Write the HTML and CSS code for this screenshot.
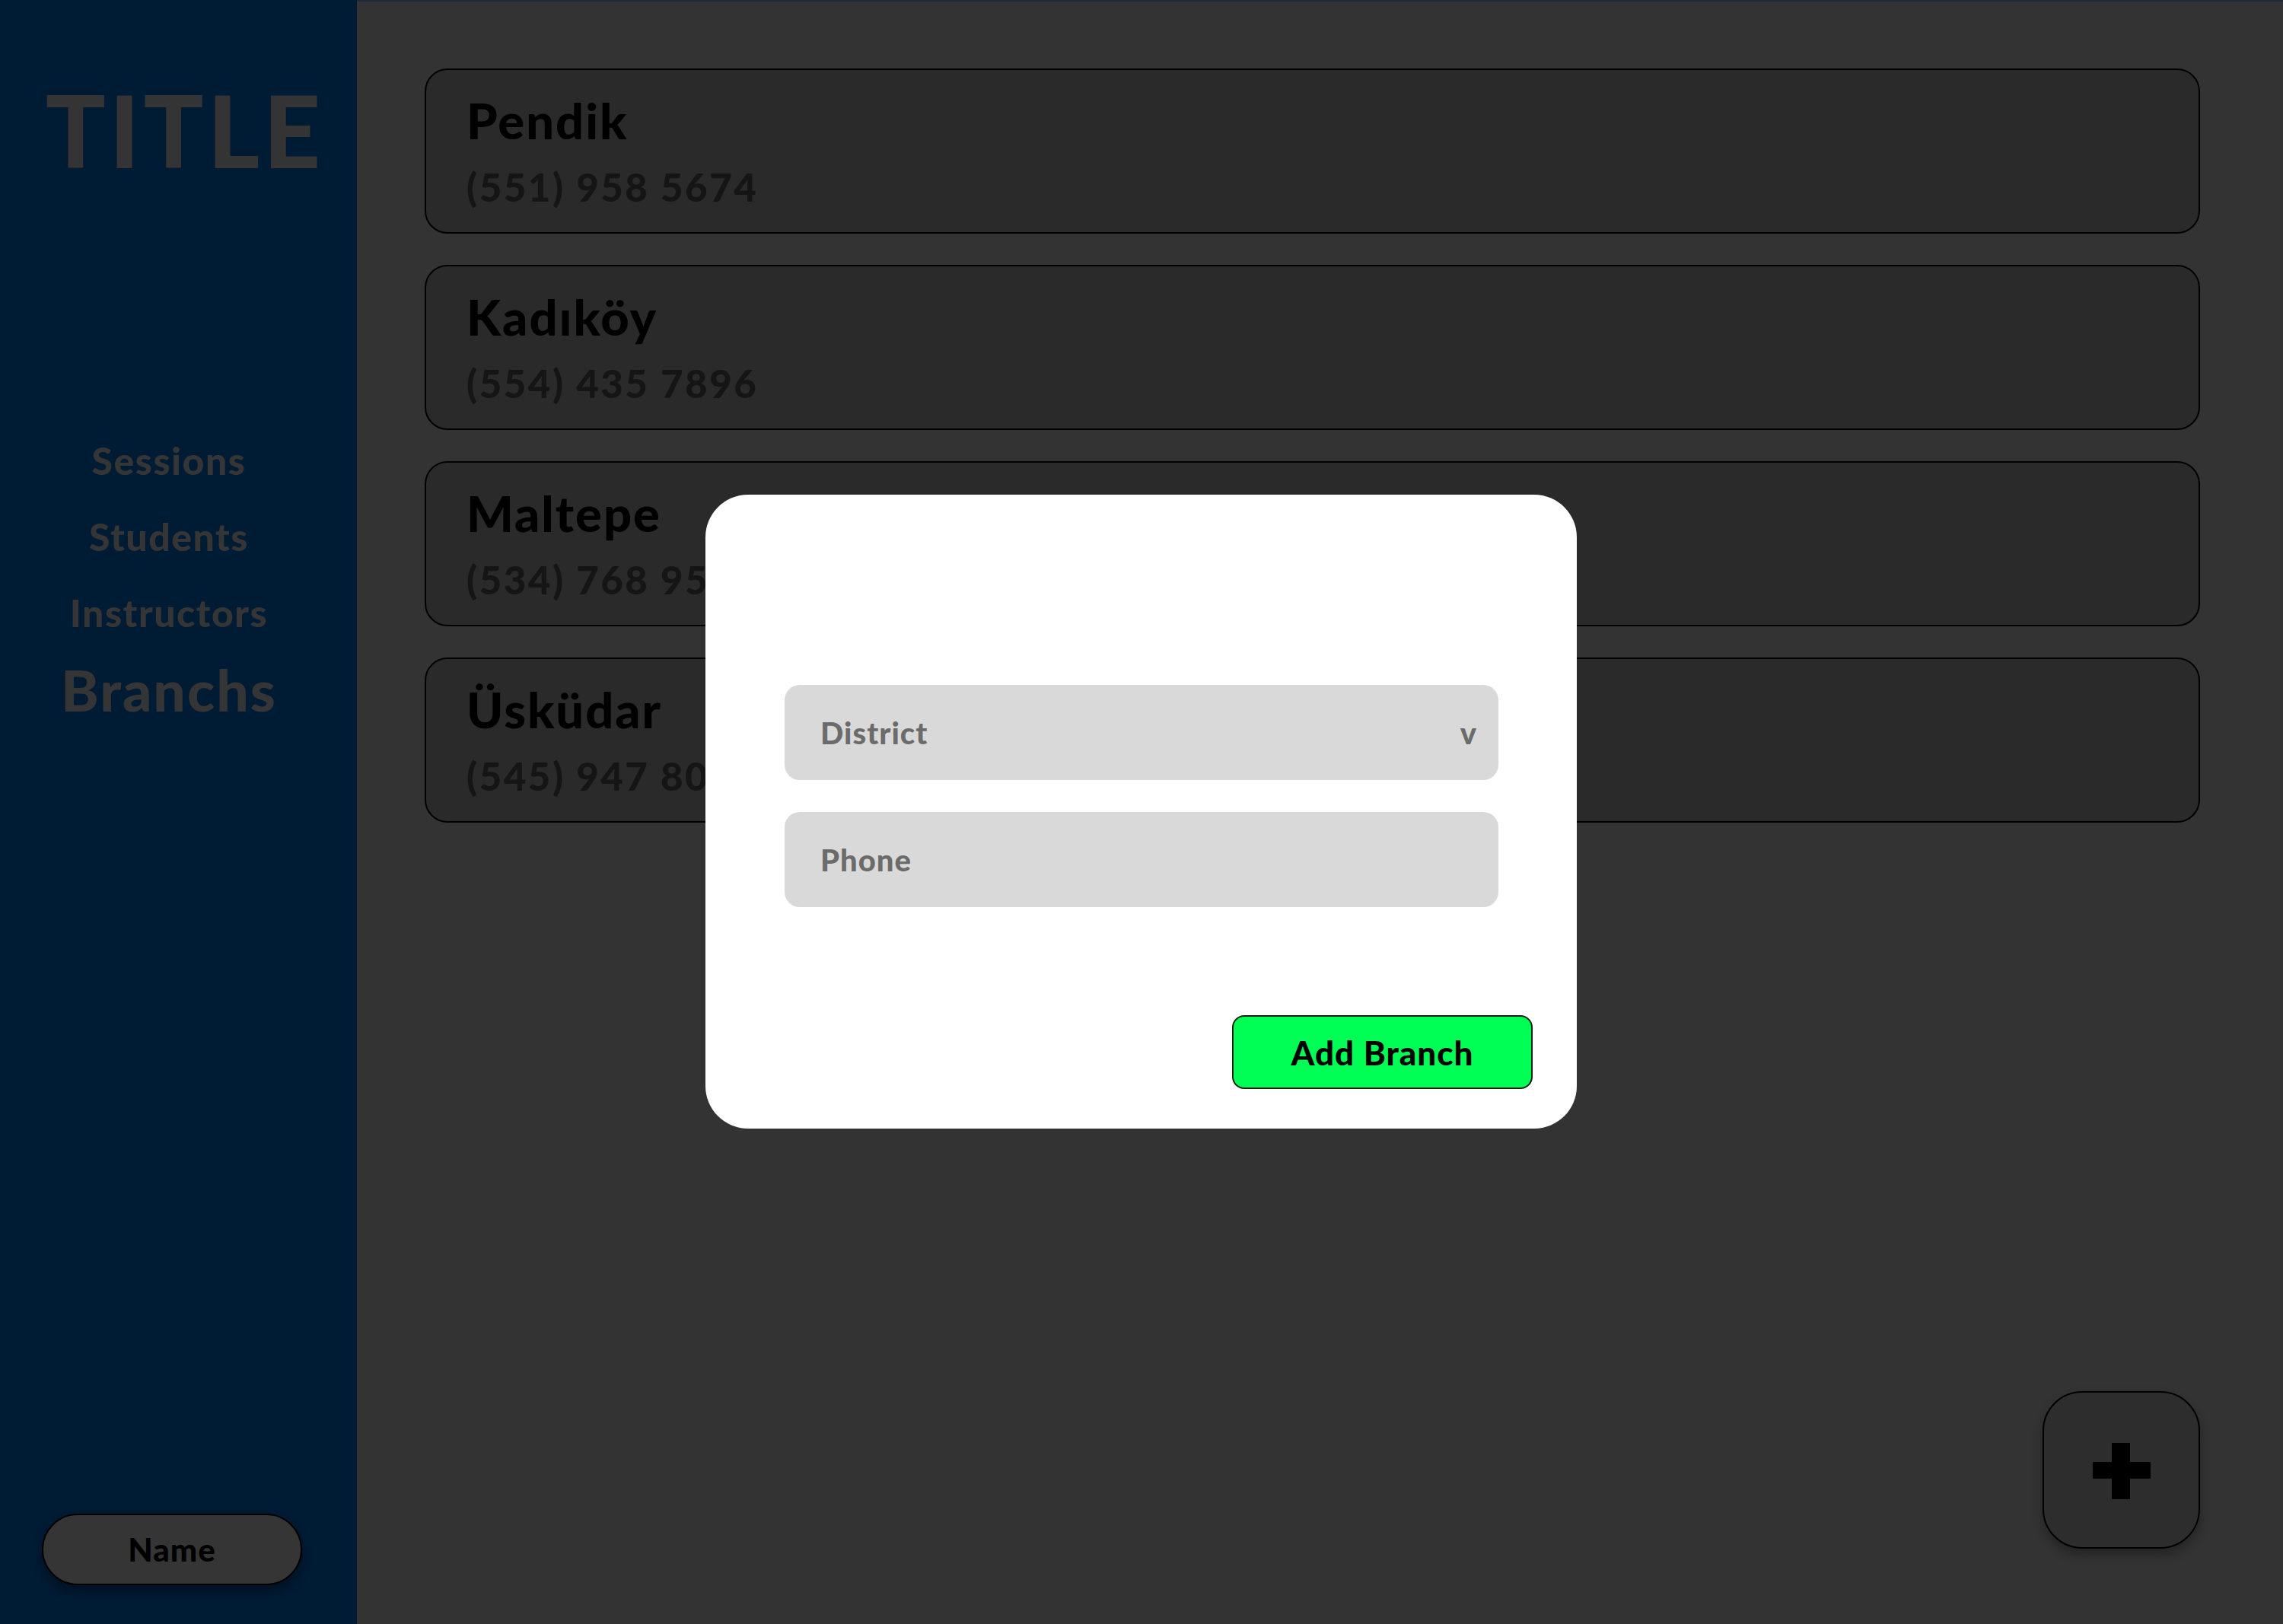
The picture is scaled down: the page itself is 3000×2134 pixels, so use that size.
FILE: index.html
```html
<!DOCTYPE html>
<html lang="en">
<head>
<meta charset="utf-8">
<title>Branchs</title>
<link rel="stylesheet" href="styles.css">
</head>
<body>
<div class="app">
  <aside class="sidebar">
    <h1 class="title">TITLE</h1>
    <nav class="nav">
      <a class="nav-item">Sessions</a>
      <a class="nav-item">Students</a>
      <a class="nav-item">Instructors</a>
      <a class="nav-item active">Branchs</a>
    </nav>
    <button class="name-btn">Name</button>
  </aside>
  <main class="main">
    <div class="card">
      <div class="card-name">Pendik</div>
      <div class="card-phone">(551) 958 5674</div>
    </div>
    <div class="card">
      <div class="card-name">Kadıköy</div>
      <div class="card-phone">(554) 435 7896</div>
    </div>
    <div class="card">
      <div class="card-name">Maltepe</div>
      <div class="card-phone">(534) 768 9521</div>
    </div>
    <div class="card">
      <div class="card-name">Üsküdar</div>
      <div class="card-phone">(545) 947 8012</div>
    </div>
  </main>
</div>
<button class="fab" aria-label="Add">
  <svg width="76" height="76" viewBox="0 0 76 76"><rect x="0" y="26" width="76" height="22" fill="#000"/><rect x="25" y="1" width="24" height="74" fill="#000"/></svg>
</button>
<div class="modal">
  <div class="fields">
    <div class="field select"><span class="ph">District</span><span class="caret">v</span></div>
    <div class="field"><span class="ph">Phone</span></div>
  </div>
  <button class="add-btn">Add Branch</button>
</div>
</body>
</html>
```
FILE: styles.css
```css
* { box-sizing: border-box; }
html, body { margin: 0; padding: 0; height: 100%; }
body {
  font-family: Lato, "Noto Sans", sans-serif;
  background: #333333;
  overflow: hidden;
}
.app {
  display: flex;
  height: 2134px;
}
.sidebar {
  width: 469px;
  flex: 0 0 469px;
  background: #001b34;
  display: flex;
  flex-direction: column;
  padding-top: 105px;
}
.title {
  margin: 0;
  padding-left: 17px;
  text-align: center;
  font-size: 131px;
  line-height: 1;
  font-weight: 900;
  color: #343434;
  letter-spacing: 5px;
}
.nav {
  display: flex;
  flex-direction: column;
  align-items: center;
  padding-right: 25px;
  margin-top: 344px;
}
.nav-item {
  font-size: 50px;
  line-height: 1;
  font-weight: 900;
  color: #353535;
  letter-spacing: 1.5px;
  margin-bottom: 50px;
}
.nav-item:nth-child(3) { margin-bottom: 39px; }
.nav-item.active {
  font-size: 75px;
  font-weight: 900;
  letter-spacing: 2px;
  margin-bottom: 0;
}
.name-btn {
  margin-top: auto;
  margin-left: 55px;
  margin-bottom: 51px;
  width: 342px;
  height: 94px;
  border-radius: 47px;
  border: 2px solid #000;
  background: #353535;
  box-shadow: 0 8px 14px rgba(0,0,0,0.35);
  font-family: Lato, "Noto Sans", sans-serif;
  font-size: 42px;
  font-weight: 900;
  color: #000;
  padding: 0;
  letter-spacing: 1px;
}
.main {
  flex: 1;
  border-top: 2px solid #1b2a3b;
  padding: 88px 109px 0 89px;
  display: flex;
  flex-direction: column;
  gap: 41px;
}
.card {
  height: 217px;
  background: #2a2a2a;
  border: 2px solid #000;
  border-radius: 30px;
  padding: 34px 53px 0;
}
.card-name {
  font-size: 65px;
  line-height: 1;
  font-weight: 900;
  color: #000;
  letter-spacing: 2px;
}
.card-phone {
  margin-top: 29px;
  font-size: 51px;
  line-height: 1;
  font-weight: 900;
  color: #151515;
  letter-spacing: 2.5px;
}
.fab {
  position: fixed;
  right: 109px;
  bottom: 99px;
  width: 207px;
  height: 207px;
  border-radius: 52px;
  border: 2px solid #000;
  background: #2d2d2d;
  box-shadow: 0 8px 14px rgba(0,0,0,0.3);
  display: flex;
  align-items: center;
  justify-content: center;
  padding: 0;
}
.fab svg { display: block; margin-top: 2px; }
.modal {
  position: fixed;
  left: 927px;
  top: 650px;
  width: 1145px;
  height: 833px;
  background: #ffffff;
  border-radius: 56px;
  display: flex;
  flex-direction: column;
  padding: 250px 58px 52px 104px;
}
.fields {
  display: flex;
  flex-direction: column;
  gap: 42px;
  margin-right: 45px;
}
.field {
  height: 125px;
  background: #d9d9d9;
  border-radius: 20px;
  display: flex;
  align-items: center;
  justify-content: space-between;
  padding: 0 29px 0 47px;
}
.ph {
  font-size: 40px;
  font-weight: 900;
  color: #6b6b6b;
  letter-spacing: 1px;
}
.caret {
  font-size: 40px;
  font-weight: 900;
  color: #6b6b6b;
}
.add-btn {
  margin-top: auto;
  align-self: flex-end;
  width: 395px;
  height: 97px;
  background: #00ff55;
  border: 2px solid #0b1f10;
  border-radius: 16px;
  font-family: Lato, "Noto Sans", sans-serif;
  font-size: 44px;
  font-weight: 900;
  color: #000;
  padding: 0;
  letter-spacing: 1px;
}
```
